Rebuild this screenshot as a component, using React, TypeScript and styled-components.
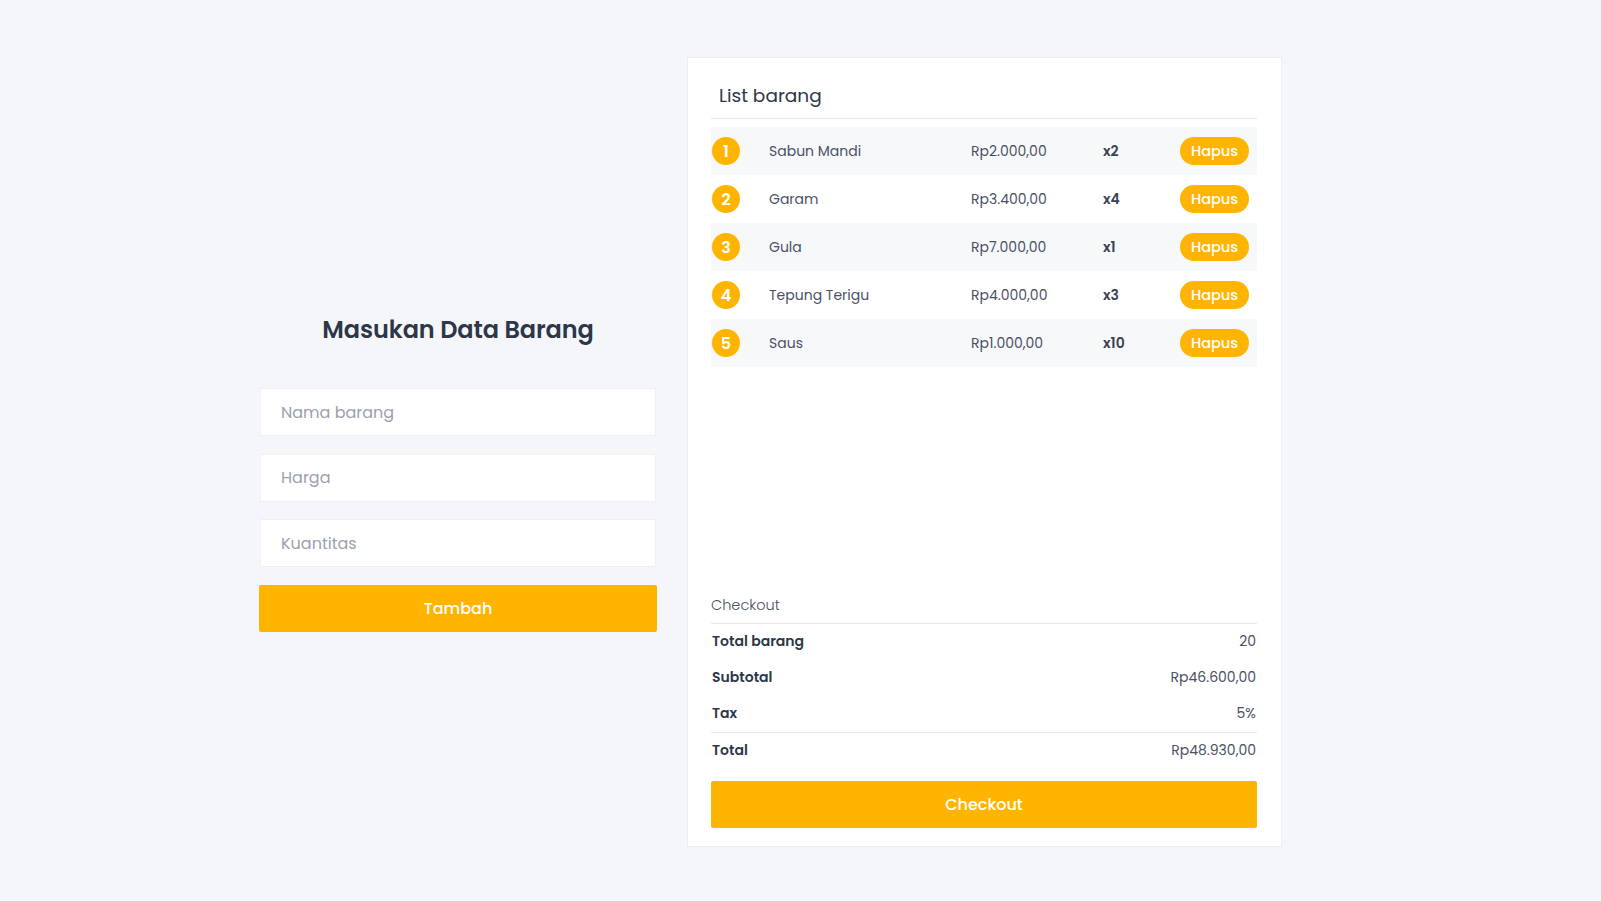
import React from "react";
import styled, { createGlobalStyle } from "styled-components";

const GlobalStyle = createGlobalStyle`
  * { box-sizing: border-box; }
  html, body { margin: 0; padding: 0; }
  body {
    background: #f5f6fa;
    font-family: "Poppins", Inter, "Open Sans", sans-serif;
    color: #3b4252;
  }
`;

const YELLOW = "#ffb400";

const Page = styled.div`
  display: flex;
  align-items: flex-start;
  gap: 30px;
  padding: 57px 0 54px 259px;
  min-height: 901px;
`;

const FormColumn = styled.div`
  width: 398px;
  padding-top: 255px;
  display: flex;
  flex-direction: column;
`;

const FormTitle = styled.h1`
  margin: 0 0 40px;
  font-size: 24px;
  line-height: 36px;
  font-weight: 600;
  text-align: center;
  color: #2d3748;
  letter-spacing: -0.1px;
`;

const Input = styled.input`
  height: 48px;
  margin: 0 1px 17.5px;
  border: 1px solid #eef0f4;
  background: #ffffff;
  padding: 0 20px;
  font-family: inherit;
  font-size: 16px;
  color: #2d3748;
  outline: none;
  &::placeholder { color: #9ba1ad; }
`;

const PrimaryButton = styled.button`
  height: 47.5px;
  width: 100%;
  border: none;
  border-radius: 2px;
  background: ${YELLOW};
  color: #ffffff;
  font-family: inherit;
  font-size: 16px;
  font-weight: 500;
  cursor: pointer;
`;

const Card = styled.section`
  width: 595px;
  height: 790px;
  background: #ffffff;
  border: 1px solid #eceef2;
  padding: 23px 24px 18px 23px;
  display: flex;
  flex-direction: column;
`;

const CardTitle = styled.h2`
  margin: 0;
  padding: 1px 8px 8px;
  font-size: 18.5px;
  line-height: 28px;
  font-weight: 400;
  color: #2d3748;
  border-bottom: 1px solid #e6e8ec;
`;

const List = styled.div`
  margin-top: 8px;
  display: flex;
  flex-direction: column;
`;

const Row = styled.div<{ $shaded: boolean }>`
  display: grid;
  grid-template-columns: 57px 202px 132px 1fr auto;
  align-items: center;
  height: 48px;
  padding: 0 8px 0 1px;
  background: ${(p) => (p.$shaded ? "#f7f8fa" : "transparent")};
  font-size: 14px;
  color: #4a5163;
`;

const Badge = styled.span`
  width: 28px;
  height: 28px;
  border-radius: 50%;
  background: ${YELLOW};
  color: #ffffff;
  font-weight: 600;
  font-size: 16px;
  display: flex;
  align-items: center;
  justify-content: center;
`;

const Qty = styled.span`
  font-weight: 600;
  color: #3b4252;
`;

const DeleteButton = styled.button`
  height: 28px;
  width: 69px;
  border: none;
  border-radius: 14px;
  background: ${YELLOW};
  color: #ffffff;
  font-family: inherit;
  font-size: 14.5px;
  font-weight: 500;
  cursor: pointer;
  padding: 0;
`;

const Checkout = styled.div`
  margin-top: auto;
  display: flex;
  flex-direction: column;
`;

const CheckoutLabel = styled.div`
  padding-bottom: 6px;
  line-height: 24px;
  font-size: 14.5px;
  font-weight: 300;
  color: #4a5163;
  border-bottom: 1px solid #e6e8ec;
`;

const SummaryRow = styled.div<{ $divider?: boolean }>`
  display: flex;
  justify-content: space-between;
  align-items: center;
  height: 36px;
  padding: 0 1px;
  font-size: 14px;
  border-top: ${(p) => (p.$divider ? "1px solid #e6e8ec" : "none")};
`;

const SummaryLabel = styled.span`
  font-weight: 600;
  color: #2d3748;
`;

const SummaryValue = styled.span`
  color: #4a5163;
`;

const ButtonSpacer = styled.div`
  margin-top: 13px;
`;

const items = [
  { name: "Sabun Mandi", price: "Rp2.000,00", qty: "x2" },
  { name: "Garam", price: "Rp3.400,00", qty: "x4" },
  { name: "Gula", price: "Rp7.000,00", qty: "x1" },
  { name: "Tepung Terigu", price: "Rp4.000,00", qty: "x3" },
  { name: "Saus", price: "Rp1.000,00", qty: "x10" },
];

export default function App() {
  return (
    <>
      <GlobalStyle />
      <Page>
        <FormColumn>
          <FormTitle>Masukan Data Barang</FormTitle>
          <Input placeholder="Nama barang" />
          <Input placeholder="Harga" />
          <Input placeholder="Kuantitas" />
          <PrimaryButton>Tambah</PrimaryButton>
        </FormColumn>
        <Card>
          <CardTitle>List barang</CardTitle>
          <List>
            {items.map((it, i) => (
              <Row key={it.name} $shaded={i % 2 === 0}>
                <Badge>{i + 1}</Badge>
                <span>{it.name}</span>
                <span>{it.price}</span>
                <Qty>{it.qty}</Qty>
                <DeleteButton>Hapus</DeleteButton>
              </Row>
            ))}
          </List>
          <Checkout>
            <CheckoutLabel>Checkout</CheckoutLabel>
            <SummaryRow>
              <SummaryLabel>Total barang</SummaryLabel>
              <SummaryValue>20</SummaryValue>
            </SummaryRow>
            <SummaryRow>
              <SummaryLabel>Subtotal</SummaryLabel>
              <SummaryValue>Rp46.600,00</SummaryValue>
            </SummaryRow>
            <SummaryRow>
              <SummaryLabel>Tax</SummaryLabel>
              <SummaryValue>5%</SummaryValue>
            </SummaryRow>
            <SummaryRow $divider>
              <SummaryLabel>Total</SummaryLabel>
              <SummaryValue>Rp48.930,00</SummaryValue>
            </SummaryRow>
            <ButtonSpacer>
              <PrimaryButton>Checkout</PrimaryButton>
            </ButtonSpacer>
          </Checkout>
        </Card>
      </Page>
    </>
  );
}
